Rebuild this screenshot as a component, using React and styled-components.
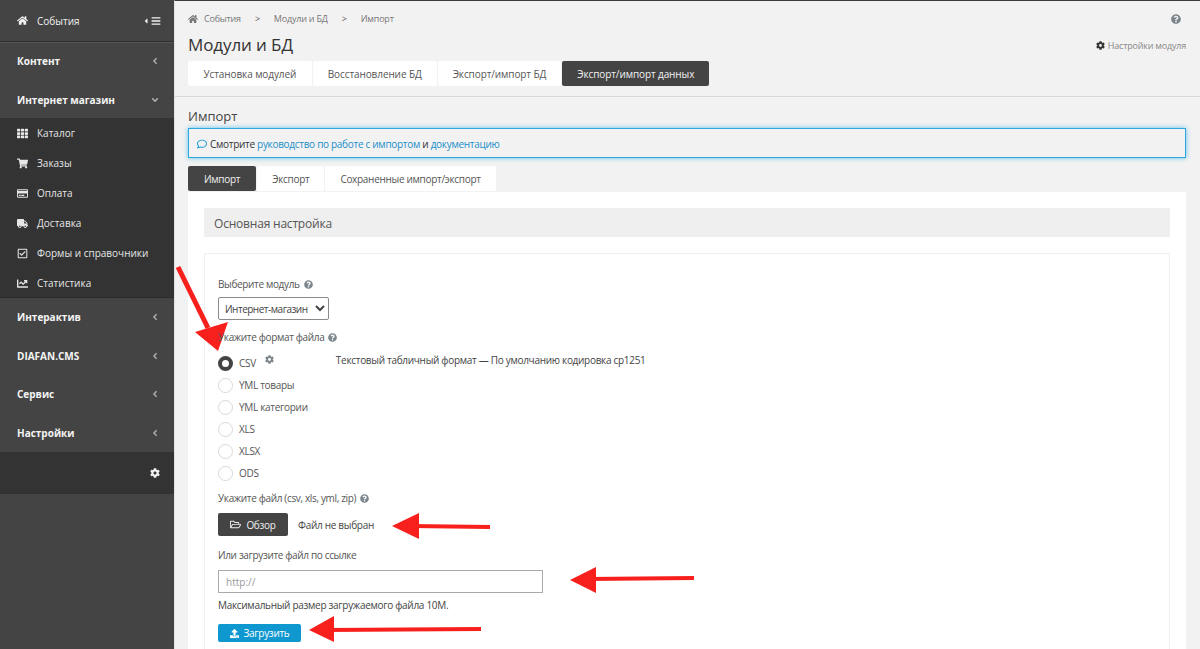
import React from 'react';
import styled, { createGlobalStyle } from 'styled-components';
import {
  FaHome, FaTh, FaShoppingCart, FaRegCreditCard, FaTruck, FaRegCheckSquare, FaChartLine,
  FaCog, FaBars, FaCaretLeft, FaAngleLeft, FaAngleDown, FaQuestionCircle, FaRegFolderOpen,
  FaUpload, FaRegComment,
} from 'react-icons/fa';

const GlobalStyle = createGlobalStyle`
  html, body {
    margin: 0;
    height: 649px;
    overflow: hidden;
    background: #f3f2f2;
    font-family: "Open Sans", "Noto Sans", sans-serif;
    font-size: 10px;
    color: #444;
  }
  * { box-sizing: border-box; }
`;

const subItems = [
  { icon: <FaTh />, label: 'Каталог' },
  { icon: <FaShoppingCart />, label: 'Заказы' },
  { icon: <FaRegCreditCard />, label: 'Оплата' },
  { icon: <FaTruck />, label: 'Доставка' },
  { icon: <FaRegCheckSquare />, label: 'Формы и справочники' },
  { icon: <FaChartLine />, label: 'Статистика' },
];

const formats = ['YML товары', 'YML категории', 'XLS', 'XLSX', 'ODS'];

const App = () => (
  <Page>
    <GlobalStyle />
    <Sidebar>
      <EventsRow>
        <FaHome size={11} />
        <EventsLabel>События</EventsLabel>
        <Toggle>
          <FaCaretLeft size={8} />
          <FaBars size={10} />
        </Toggle>
      </EventsRow>
      <MenuHead>Контент<FaAngleLeft size={10} /></MenuHead>
      <MenuHead>Интернет магазин<FaAngleDown size={10} /></MenuHead>
      <SubMenu>
        {subItems.map(item => (
          <SubItem key={item.label}>
            <SubIcon>{item.icon}</SubIcon>
            {item.label}
          </SubItem>
        ))}
      </SubMenu>
      <MenuHead>Интерактив<FaAngleLeft size={10} /></MenuHead>
      <MenuHead>DIAFAN.CMS<FaAngleLeft size={10} /></MenuHead>
      <MenuHead>Сервис<FaAngleLeft size={10} /></MenuHead>
      <MenuHead>Настройки<FaAngleLeft size={10} /></MenuHead>
      <SideFooter><FaCog size={10} /></SideFooter>
    </Sidebar>

    <Main>
      <Header>
        <Crumbs>
          <FaHome size={10} />
          <span>События</span>
          <Sep>&gt;</Sep>
          <span>Модули и БД</span>
          <Sep>&gt;</Sep>
          <span>Импорт</span>
          <HelpTop><FaQuestionCircle size={10} /></HelpTop>
        </Crumbs>
        <TitleRow>
          <Title>Модули и БД</Title>
          <ModuleSettings><FaCog size={9} color="#333" />Настройки модуля</ModuleSettings>
        </TitleRow>
        <Tabs>
          <Tab $pad={15.5} $spacing={-0.1}>Установка модулей</Tab>
          <Tab $pad={15} $spacing={-0.1}>Восстановление БД</Tab>
          <Tab $pad={15} $spacing={-0.1}>Экспорт/импорт БД</Tab>
          <Tab $pad={15} $spacing={-0.1} $active>Экспорт/импорт данных</Tab>
        </Tabs>
      </Header>

      <Body>
        <SectionTitle>Импорт</SectionTitle>
        <InfoBox>
          <FaRegComment size={10} color="#1a9ad6" />
          <span>Смотрите <Link>руководство по работе с импортом</Link> и <Link>документацию</Link></span>
        </InfoBox>
        <Tabs $top={8}>
          <Tab $pad={16} $spacing={-0.3} $active>Импорт</Tab>
          <Tab $pad={15} $spacing={-0.3}>Экспорт</Tab>
          <Tab $pad={15} $spacing={-0.3}>Сохраненные импорт/экспорт</Tab>
        </Tabs>
        <Panel>
          <PanelHead>Основная настройка</PanelHead>
          <FormBox>
            <Label>Выберите модуль <Help><FaQuestionCircle size={9} /></Help></Label>
            <Select defaultValue="shop">
              <option value="shop">Интернет-магазин</option>
            </Select>
            <Label $top={10}>Укажите формат файла <Help><FaQuestionCircle size={9} /></Help></Label>
            <RadioList>
              <RadioRow>
                <Radio $checked />
                CSV
                <CsvGear><FaCog size={9} /></CsvGear>
                <FormatNote>Текстовый табличный формат — По умолчанию кодировка cp1251</FormatNote>
              </RadioRow>
              {formats.map(name => (
                <RadioRow key={name}>
                  <Radio />
                  {name}
                </RadioRow>
              ))}
            </RadioList>
            <Label $top={9}>Укажите файл (csv, xls, yml, zip) <Help><FaQuestionCircle size={9} /></Help></Label>
            <FileRow>
              <DarkButton><FaRegFolderOpen size={11} />Обзор</DarkButton>
              <span>Файл не выбран</span>
            </FileRow>
            <Label $top={12}>Или загрузите файл по ссылке</Label>
            <UrlInput placeholder="http://" />
            <Hint>Максимальный размер загружаемого файла 10M.</Hint>
            <BlueButton><FaUpload size={9} />Загрузить</BlueButton>
          </FormBox>
        </Panel>
      </Body>
    </Main>

    <Arrow $x={170} $y={260} width="60" height="96" viewBox="0 0 60 96">
      <path d="M8 7 L38 68" stroke="#f8201c" strokeWidth="5" fill="none" />
      <polygon points="48,91 25,72 58,62" fill="#f8201c" />
    </Arrow>
    <Arrow $x={390} $y={510} width="104" height="32" viewBox="0 0 104 32">
      <path d="M20 16 L100 17" stroke="#f8201c" strokeWidth="4" fill="none" />
      <polygon points="2,16 29,3 29,29" fill="#f8201c" />
    </Arrow>
    <Arrow $x={567} $y={564} width="130" height="32" viewBox="0 0 130 32">
      <path d="M20 15 L127 14" stroke="#f8201c" strokeWidth="4" fill="none" />
      <polygon points="3,16 29,3 29,29" fill="#f8201c" />
    </Arrow>
    <Arrow $x={306} $y={614} width="178" height="32" viewBox="0 0 178 32">
      <path d="M20 16 L175 15" stroke="#f8201c" strokeWidth="4" fill="none" />
      <polygon points="3,16 28,2 28,28" fill="#f8201c" />
    </Arrow>
  </Page>
);

export default App;

const Page = styled.div`
  position: relative;
  display: flex;
  width: 1200px;
  height: 649px;
  overflow: hidden;
`;

const Sidebar = styled.aside`
  flex: 0 0 174px;
  height: 649px;
  background: #444;
  color: #f2f2f2;
`;

const EventsRow = styled.div`
  display: flex;
  align-items: center;
  height: 42px;
  padding: 0 13px 0 17px;
  border-bottom: 1px solid #2f2f2f;
  box-shadow: 0 1px 0 #555;
`;

const EventsLabel = styled.span`
  margin-left: 9px;
`;

const Toggle = styled.span`
  display: flex;
  align-items: center;
  gap: 1px;
  margin-left: auto;
`;

const MenuHead = styled.div`
  display: flex;
  align-items: center;
  justify-content: space-between;
  height: 38.6px;
  padding: 0 14px 0 17px;
  font-weight: 700;
  color: #f4f4f4;

  svg {
    color: #aaa;
  }
`;

const SubMenu = styled.div`
  height: 179.6px;
  background: #333;
  border-bottom: 1px solid #2c2c2c;
`;

const SubItem = styled.div`
  display: flex;
  align-items: center;
  height: 30px;
  padding-left: 17px;
  color: #e6e6e6;

  &:first-child {
    margin-top: -1px;
  }
`;

const SubIcon = styled.span`
  display: flex;
  justify-content: flex-start;
  width: 20px;
  font-size: 11px;
`;

const SideFooter = styled.div`
  display: flex;
  align-items: center;
  justify-content: flex-end;
  height: 42px;
  padding-right: 14px;
  background: #333;
`;

const Main = styled.main`
  flex: 1;
  min-width: 0;
  border-left: 1px solid #e2e2e2;
  border-top: 1px solid #3a3a3a;
`;

const Header = styled.header`
  height: 96px;
  padding: 0 14px 0 13px;
  border-bottom: 1px solid #d9d9d9;
`;

const Crumbs = styled.div`
  display: flex;
  align-items: center;
  gap: 6px;
  height: 36px;
  padding-bottom: 1px;
  font-size: 9px;
  letter-spacing: -0.2px;
  color: #777;
`;

const Sep = styled.span`
  margin: 0 8px;
  color: #555;
`;

const HelpTop = styled.span`
  display: flex;
  margin: 0 5px 0 auto;
  color: #7b858c;
`;

const TitleRow = styled.div`
  display: flex;
  align-items: center;
  justify-content: space-between;
  height: 23px;
  margin-top: -4px;
  margin-bottom: 5px;
`;

const Title = styled.h1`
  margin: 0;
  font-size: 17px;
  letter-spacing: -0.1px;
  font-weight: 400;
  color: #333;
`;

const ModuleSettings = styled.span`
  display: flex;
  align-items: center;
  gap: 3px;
  margin-top: 2px;
  font-size: 9px;
  letter-spacing: -0.2px;
  color: #888;
`;

const Tabs = styled.div`
  display: flex;
  gap: 1px;
  margin-top: ${({ $top }) => $top || 0}px;
`;

const Tab = styled.div`
  display: flex;
  align-items: center;
  height: 25px;
  padding: 0 ${({ $pad }) => $pad}px;
  border-radius: 2px;
  letter-spacing: ${({ $spacing }) => $spacing}px;
  background: ${({ $active }) => ($active ? '#444' : '#fff')};
  color: ${({ $active }) => ($active ? '#f2f2f2' : '#555')};
`;

const Body = styled.div`
  padding: 10px 14px 0 13px;
`;

const SectionTitle = styled.h2`
  margin: 0 0 3px;
  height: 18px;
  font-size: 13px;
  line-height: 18px;
  font-weight: 400;
  color: #444;
`;

const InfoBox = styled.div`
  display: flex;
  align-items: center;
  gap: 3px;
  height: 30px;
  padding: 1px 0 0 8px;
  border: 1px solid #2ea8dc;
  box-shadow: 0 0 5px #5cc2ee;
  letter-spacing: -0.3px;
  color: #333;
`;

const Link = styled.span`
  color: #1a8fc9;
`;

const Panel = styled.section`
  height: 480px;
  margin-top: 1px;
  padding: 16px;
  background: #fff;
`;

const PanelHead = styled.div`
  display: flex;
  align-items: center;
  height: 29px;
  padding: 1px 0 0 10px;
  background: #efefef;
  font-size: 12px;
  letter-spacing: -0.2px;
  color: #555;
`;

const FormBox = styled.div`
  display: flex;
  flex-direction: column;
  align-items: flex-start;
  height: 420px;
  margin-top: 16px;
  padding: 23px 13px 0;
  border: 1px solid #f0f0f0;
  letter-spacing: -0.3px;
`;

const Label = styled.div`
  position: relative;
  z-index: 1;
  display: flex;
  align-items: center;
  gap: 4px;
  height: 14px;
  margin-top: ${({ $top }) => $top || 0}px;
  letter-spacing: -0.35px;
  color: #555;
`;

const Help = styled.span`
  display: flex;
  color: #7b858c;
`;

const Select = styled.select`
  width: 111px;
  height: 23px;
  margin-top: 6px;
  padding: 0 0 0 2px;
  border: 1px solid #8a8a8a;
  border-radius: 2px;
  background: #fff;
  font-family: inherit;
  font-size: 10px;
  letter-spacing: -0.5px;
  color: #444;
`;

const RadioList = styled.div`
  display: flex;
  flex-direction: column;
  gap: 4px;
  width: 100%;
  margin-top: 10px;
`;

const RadioRow = styled.div`
  display: flex;
  align-items: center;
  gap: 6px;
  height: 18px;
  color: #555;
`;

const Radio = styled.span`
  flex: none;
  width: 15px;
  height: 15px;
  border-radius: 50%;
  border: ${({ $checked }) => ($checked ? '4px solid #444' : '1.5px solid #d5d9da')};
  background: #fff;
`;

const CsvGear = styled.span`
  display: flex;
  margin: -7px 0 0 3px;
  color: #7b858c;
`;

const FormatNote = styled.span`
  margin: -7px 0 0 56px;
  color: #444;
`;

const FileRow = styled.div`
  display: flex;
  align-items: center;
  gap: 10px;
  margin-top: 8px;
  color: #444;
`;

const DarkButton = styled.div`
  display: flex;
  align-items: center;
  justify-content: center;
  gap: 5px;
  width: 70px;
  height: 23px;
  border-radius: 2px;
  background: #444;
  color: #f0f0f0;
`;

const UrlInput = styled.input`
  width: 325px;
  height: 23px;
  margin-top: 8px;
  padding: 0 7px;
  border: 1px solid #aaa;
  background: #fff;
  font-family: inherit;
  font-size: 10px;

  &::placeholder {
    color: #999;
  }
`;

const Hint = styled.div`
  margin-top: 5px;
  height: 14px;
  color: #444;
`;

const BlueButton = styled.div`
  display: flex;
  align-items: center;
  justify-content: center;
  gap: 5px;
  width: 83px;
  height: 18px;
  margin-top: 12px;
  border-radius: 2px;
  background: #0f97d0;
  color: #fff;
`;

const Arrow = styled.svg`
  position: absolute;
  left: ${({ $x }) => $x}px;
  top: ${({ $y }) => $y}px;
`;
